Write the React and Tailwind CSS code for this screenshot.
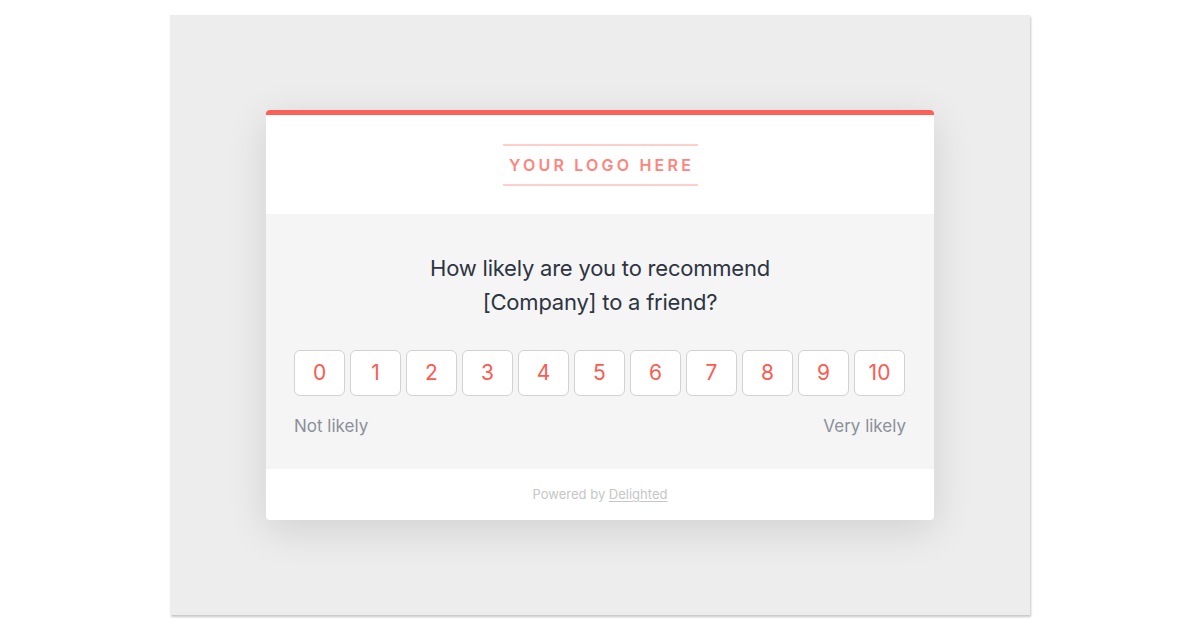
export default function App() {
  const scores = [0, 1, 2, 3, 4, 5, 6, 7, 8, 9, 10];
  return (
    <div className="w-[1200px] h-[630px] bg-white flex justify-center pt-[15px]" style={{ fontFamily: 'Inter, "Liberation Sans", sans-serif' }}>
      <div className="w-[860px] h-[600px] bg-[#ededed] shadow-[1px_2px_2px_rgba(0,0,0,0.22)] flex items-center justify-center">
        <div className="w-[668px] bg-white rounded-[4px] overflow-hidden shadow-[0_10px_40px_rgba(0,0,0,0.12)]">
          <div className="h-[5px] bg-[#ff5f57]" />
          <div className="h-[99px] flex items-center justify-center">
            <div className="w-[195px] h-[42px] border-y-2 border-[#ffd0cb] flex items-center justify-center">
              <span className="text-[16px] font-semibold tracking-[0.2em] text-[#ff847c] pl-[3px]">YOUR LOGO HERE</span>
            </div>
          </div>
          <div className="bg-[#f5f5f5] pt-[37px] pb-[31px] px-[28px]">
            <p className="text-center text-[22px] leading-[34px] text-[#2d3442] tracking-[-0.01em]">
              How likely are you to recommend
              <br />
              [Company] to a friend?
            </p>
            <div className="mt-[31px] flex gap-[5px]">
              {scores.map((n) => (
                <button
                  key={n}
                  className="w-[51px] h-[46px] bg-white border border-[#d2d2d2] rounded-[6px] text-[21px] text-[#ff5a4f] flex items-center justify-center"
                >
                  {n}
                </button>
              ))}
            </div>
            <div className="mt-[18px] flex justify-between text-[17px] leading-[24px] text-[#8a909a]">
              <span>Not likely</span>
              <span>Very likely</span>
            </div>
          </div>
          <div className="h-[51px] flex items-center justify-center text-[13px] text-[#c6c6c6]">
            <span>
              Powered by <span className="underline underline-offset-2">Delighted</span>
            </span>
          </div>
        </div>
      </div>
    </div>
  );
}
